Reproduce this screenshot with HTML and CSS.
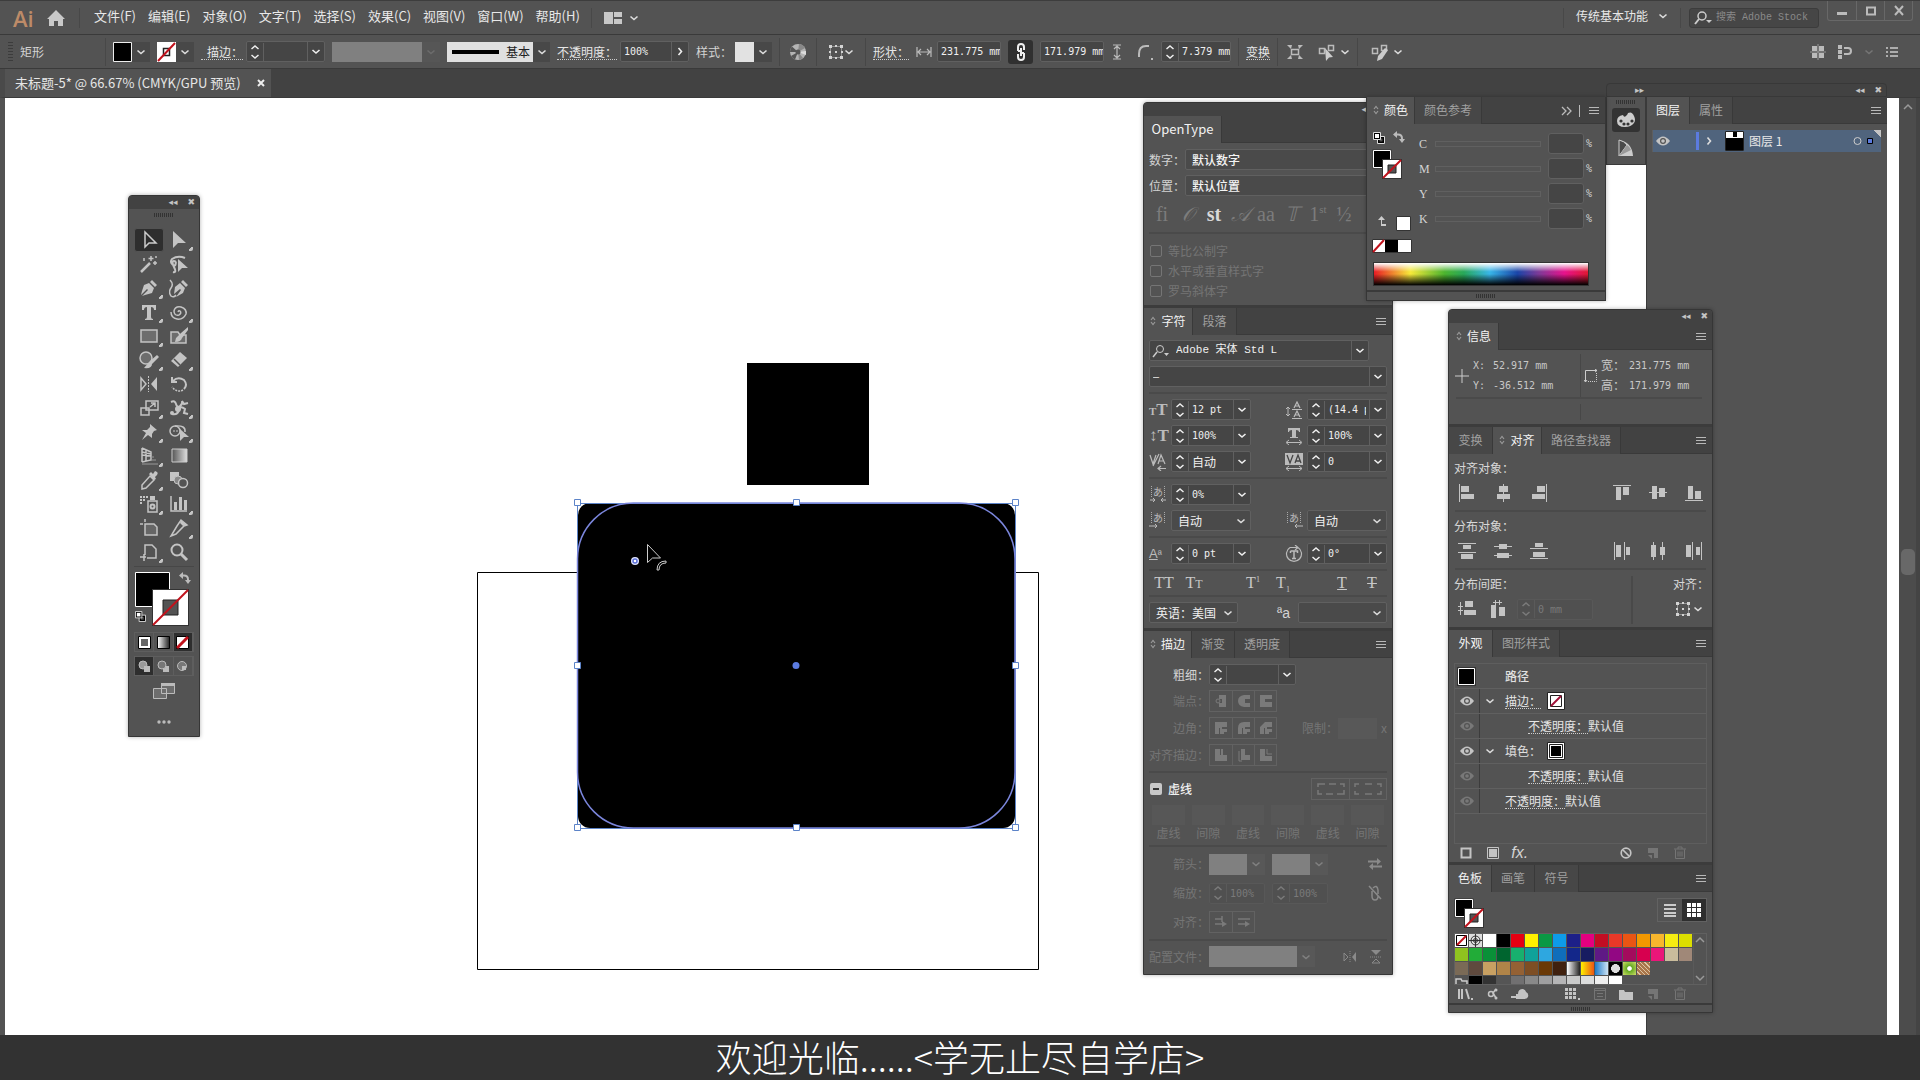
FILE: index.html
```html
<!DOCTYPE html>
<html lang="zh-CN">
<head>
<meta charset="utf-8">
<title>未标题-5* @ 66.67% (CMYK/GPU 预览)</title>
<link rel="stylesheet" href="styles.css">
</head>
<body>
<svg class="defs" aria-hidden="true">
  <defs>
    <linearGradient id="gr"><stop offset="0" stop-color="#555"/><stop offset="1" stop-color="#ddd"/></linearGradient>
    <linearGradient id="gb"><stop offset="0" stop-color="#fff"/><stop offset="1" stop-color="#222"/></linearGradient>
  </defs>
  <symbol id="chev" viewBox="0 0 10 10"><path d="M1.500 3.500 5 6.500l3.500-3" fill="none" stroke="currentColor" stroke-width="1.600"/></symbol>
  <symbol id="chev-r" viewBox="0 0 10 10"><path d="M3.500 1.500 6.500 5l-3 3.500" fill="none" stroke="currentColor" stroke-width="1.600"/></symbol>
  <symbol id="step" viewBox="0 0 10 18"><path d="M1.500 6 5 3l3.500 3M1.500 12 5 15l3.500-3" fill="none" stroke="currentColor" stroke-width="1.500"/></symbol>
  <symbol id="menu" viewBox="0 0 10 9"><path d="M0 1.500h10M0 4.500h10M0 7.500h10" stroke="currentColor"/></symbol>
  <symbol id="updown" viewBox="0 0 6 10"><path d="M1 4 3 1.500 5 4M1 6l2 2.500L5 6" fill="none" stroke="#999" stroke-width="1.200"/></symbol>
  <symbol id="eye" viewBox="0 0 14 10"><path d="M0 5q7-9 14 0q-7 9-14 0" fill="currentColor"/><circle cx="7" cy="5" r="3" fill="#535353"/><circle cx="7" cy="5" r="1.800" fill="currentColor"/></symbol>
  <symbol id="trash" viewBox="0 0 12 14"><path d="M0 3h12M4 3V1h4v2M1.500 3.500v9h9v-9M4 5.500v5M6 5.500v5M8 5.500v5" fill="none" stroke="currentColor"/></symbol>
  <symbol id="newitem" viewBox="0 0 12 12"><path d="M1 1h10v10H7V6H1z" fill="currentColor"/><path d="M1 8h4v4z" fill="currentColor"/></symbol>
  <symbol id="refpt" viewBox="0 0 16 16"><rect x="2.500" y="2.500" width="11" height="11" fill="none" stroke="currentColor" stroke-dasharray="1 1"/><path d="M1 1h3v3H1zM12 1h3v3h-3zM1 12h3v3H1zM12 12h3v3h-3zM7 1h2v2H7zM7 13h2v2H7zM1 7h2v2H1zM13 7h2v2h-2zM7 7h2v2H7z" fill="currentColor"/></symbol>
  <symbol id="fillstroke" viewBox="0 0 30 30"><path d="M.500.500h19v19H.500z" fill="#333"/><path d="M1.500 1.500h17v17h-17z" fill="#000" stroke="#fff"/><path d="M10 10h20v20H10z" fill="#333"/><path d="M11 11h18v18H11z" fill="#fff"/><path d="M16 16h8v8h-8z" fill="#535353" stroke="#222"/><path d="m11 29 18-18" stroke="#c1121c" stroke-width="2"/></symbol>
  <symbol id="default" viewBox="0 0 12 12"><path d="M4.500 4.500h7v7h-7z" fill="#000" stroke="#ddd"/><path d="M6.500 6.500h3v3h-3z" fill="#535353"/><path d="M.500.500h7v7h-7z" fill="#000" stroke="#ddd"/><path d="M2 2h4v4H2z" fill="#fff"/></symbol>
  <symbol id="swap" viewBox="0 0 12 12"><path d="M3 3.500h2q4 0 4 4V9" fill="none" stroke="currentColor" stroke-width="2"/><path d="M4 0v7L0 3.500zM6 8h6l-3 4z" fill="currentColor"/></symbol>
</svg>

<div class="app">
  <header class="menubar">
    <span class="logo">Ai</span>
    <button class="plain home" aria-label="主页"><svg width="20" height="18" viewBox="0 0 20 18"><path d="M10 1 1 10h2v7h5v-5h4v5h5v-7h2z" fill="#c9c9c9"/></svg></button>
    <nav class="menus">
      <button>文件(F)</button><button>编辑(E)</button><button>对象(O)</button><button>文字(T)</button><button>选择(S)</button><button>效果(C)</button><button>视图(V)</button><button>窗口(W)</button><button>帮助(H)</button>
    </nav>
    <button class="plain layout" aria-label="排列文档"><svg width="18" height="12" viewBox="0 0 18 12"><path d="M0 0h9v12H0zM10 0h8v5h-8zM10 7h8v5h-8z" fill="#c8c8c8"/></svg><svg class="c10"><use href="#chev"/></svg></button>
    <span class="spacer"></span>
    <button class="plain workspace-name">传统基本功能<svg class="c10"><use href="#chev"/></svg></button>
    <label class="search"><svg width="18" height="14" viewBox="0 0 18 14"><circle cx="8" cy="5" r="4" fill="none" stroke="#ccc" stroke-width="1.500"/><path d="m5 8-4 5" stroke="#ccc" stroke-width="2"/><path d="M12 9h6l-3 3z" fill="#ccc"/></svg><input aria-label="搜索" placeholder="搜索 Adobe Stock"></label>
    <div class="winbtns">
      <button aria-label="最小化"><svg width="12" height="12"><path d="M1 7h10v3H1z" fill="#bbb"/></svg></button>
      <button aria-label="还原"><svg width="12" height="12"><path d="M2 2.500h8v7H2z" fill="none" stroke="#bbb" stroke-width="2"/></svg></button>
      <button aria-label="关闭"><svg width="12" height="12"><path d="m2 1 8 9m0-9-8 9" stroke="#bbb" stroke-width="2"/></svg></button>
    </div>
  </header>

  <section class="control" aria-label="控制">
    <i class="vgrip"></i>
    <span class="kind">矩形</span>
    <button class="swcombo" aria-label="填色"><svg width="19" height="20"><path d="M.500.500h18v19H.500z" stroke="#eee"/></svg><svg class="c10"><use href="#chev"/></svg></button>
    <button class="swcombo" aria-label="描边颜色"><svg width="19" height="20"><path d="M0 0h19v20H0z" fill="#fff"/><path d="M6.500 6.500h6v7h-6z" fill="none" stroke="#222" stroke-width="1.500"/><path d="m1 19 17-18" stroke="#c1121c" stroke-width="2"/></svg><svg class="c10"><use href="#chev"/></svg></button>
    <div class="grp"><label class="dotted w42" for="sw">描边：</label><span class="field w79"><svg class="st"><use href="#step"/></svg><input id="sw"><svg class="ch"><use href="#chev"/></svg></span></div>
    <button class="graycombo" disabled aria-label="变量宽度"><i></i><svg class="c10"><use href="#chev"/></svg></button>
    <button class="brush"><i></i><span>基本</span><svg class="c10"><use href="#chev"/></svg></button>
    <div class="grp"><label class="dotted" for="op">不透明度：</label><span class="field w69"><input id="op" value="100%"><svg class="ch"><use href="#chev-r"/></svg></span></div>
    <div class="grp"><span>样式：</span><button class="swcombo" aria-label="样式"><svg width="19" height="20"><path d="M0 0h19v20H0z" fill="#e2e2e2"/></svg><svg class="c10"><use href="#chev"/></svg></button></div>
    <i class="vdiv"></i>
    <button class="plain w22" aria-label="重新着色"><svg width="18" height="18"><circle cx="9" cy="9" r="8" fill="#b4b4b4"/><path d="M9 9 3 3.500A8 8 0 0 0 1 9zM9 9l-7 4q2 3 4 3.500z" fill="#555"/><path d="M9 9 10 1q4 0 6 4z" fill="#888"/><path d="M9 9l8-1v4z" fill="#ddd"/><path d="M9 9l1 8 4-2z" fill="#888"/><circle cx="9" cy="9" r="2.500" fill="#555"/></svg></button>
    <i class="vdiv"></i>
    <button class="plain w34" aria-label="对齐"><svg width="16" height="16"><use href="#refpt"/></svg><svg class="c10"><use href="#chev"/></svg></button>
    <i class="vdiv"></i>
    <div class="grp"><label class="dotted" for="wd">形状：</label><svg class="w22" height="12" viewBox="0 0 22 12"><path d="M5 1v10M19 1v10M6 6h12M9 3 6 6l3 3M15 3l3 3-3 3" fill="none" stroke="#bbb" stroke-width="1.200"/></svg><span class="field w64"><input id="wd" value="231.775 mm"></span></div>
    <button class="link" aria-label="约束宽高比"><svg width="12" height="18" viewBox="0 0 12 18"><path d="M3 8V4q0-3 3-3t3 3v3M9 10v4q0 3-3 3t-3-3v-3M6 5v8M3 8h3M6 10h3" fill="none" stroke="#eee" stroke-width="2"/></svg></button>
    <span class="field w64"><input aria-label="高度" value="171.979 mm"></span>
    <svg width="12" height="16" viewBox="0 0 12 16"><path d="M2 1h8M2 15h8M6 2v12M3 5l3-3 3 3M3 11l3 3 3-3" fill="none" stroke="#bbb" stroke-width="1.200"/></svg>
    <button class="plain corner" aria-label="圆角"><svg width="17" height="16"><path d="M2 13V10Q2 2 9 2h3" fill="none" stroke="#bbb" stroke-width="2"/><path d="M14 14h2v2h-2z" fill="#bbb"/></svg></button>
    <span class="field w70"><svg class="st"><use href="#step"/></svg><input aria-label="圆角半径" value="7.379 mm"></span>
    <i class="vdiv"></i>
    <a class="dotted" href="#">变换</a>
    <i class="vdiv"></i>
    <button class="plain w20" aria-label="隔离"><svg width="16" height="16"><path d="M4.500 5.500h7v5h-7z" fill="none" stroke="#bbb" stroke-width="1.500"/><path d="m0 1 5 0-1 4zM16 1l-5 0 1 4zM0 15l5 0-1-4zM16 15l-5 0 1-4z" fill="#bbb"/></svg></button>
    <button class="plain w38" aria-label="选择类似"><svg width="18" height="18"><path d="M1.500 5.500h5v5h-5zM10.500 2.500h5v5h-5z" fill="none" stroke="#bbb" stroke-width="1.500"/><path d="m7 5 8 9-4 .500L8 18z" fill="#ccc"/></svg><svg class="c10"><use href="#chev"/></svg></button>
    <i class="vdiv"></i>
    <button class="plain w38" aria-label="编辑"><svg width="18" height="18"><path d="M1.500 5.500h5v5h-5zM10.500 2.500h5v5h-5z" fill="none" stroke="#bbb" stroke-width="1.500"/><path d="m14 5 3 2-6 9-5 2 1-5z" fill="#ccc"/></svg><svg class="c10"><use href="#chev"/></svg></button>
    <span class="spacer"></span>
    <div class="rightgrp">
      <svg width="16" height="16"><path d="M2 2h5v5H2zM9 2h5v5H9zM2 9h5v5H2zM9 9h5v5H9z" fill="#bbb"/><path d="M8 0v16M0 8h16" stroke="#999"/></svg>
      <svg width="14" height="16"><path d="M0 1h4v4H0zM0 6h4v4H0zM0 11h4v4H0z" fill="#bbb"/><path d="M6 4h4q3 0 3 3t-3 3H6" fill="none" stroke="#bbb" stroke-width="2"/></svg>
      <svg class="c10 dim"><use href="#chev"/></svg>
      <svg width="12" height="12"><path d="M0 2h2M4 2h8M0 6h2M4 6h8M0 10h2M4 10h8" stroke="#ccc" stroke-width="1.500"/></svg>
    </div>
  </section>

  <div class="doctabs"><div class="doctab"><span>未标题-5* @ 66.67% (CMYK/GPU 预览)</span><button class="plain" aria-label="关闭文档"><svg width="8" height="8"><path d="m1 1 6 6m0-6L1 7" stroke="#eee" stroke-width="2"/></svg></button></div></div>

  <main class="stage">
    <svg class="art" width="1100" height="937" viewBox="5 98 1100 937">
      <path d="M477.500 572.500h561v397h-561z" fill="none" stroke="#000"/>
      <path d="M747 363h122v122H747z"/>
      <rect x="578" y="503" width="437" height="325" rx="12"/>
      <path d="M577.500 503.500h438v325h-438z" fill="none" stroke="#5c83c8"/>
      <rect x="577.500" y="503" width="437.500" height="325" rx="56" fill="none" stroke="#7b86dc" stroke-width="1.500"/>
      <g fill="#fff" stroke="#5c83c8"><path d="M574.500 499.500h6v6h-6zM793.500 499.500h6v6h-6zM1012.500 499.500h6v6h-6zM574.500 662.500h6v6h-6zM1012.500 662.500h6v6h-6zM574.500 824.500h6v6h-6zM793.500 824.500h6v6h-6zM1012.500 824.500h6v6h-6z"/></g>
      <circle cx="796" cy="665.500" r="3.500" fill="#5b7be0"/>
      <circle cx="635" cy="561" r="4" fill="#dfe4ff"/><circle cx="635" cy="561" r="2" fill="#fff" stroke="#5b6fd8" stroke-width="1.500"/>
      <path d="M647.500 544.500v18l5-4.500h8zM657 570q0-9 9-9v2q-7 0-7 7z" fill="#000" stroke="#ccc"/>
    </svg>
    <div class="vscroll"><svg class="c10"><path d="m1 7 4-4 4 4" fill="none" stroke="#999" stroke-width="1.500"/></svg><i></i></div>
  </main>
  <footer class="caption">欢迎光临......&lt;学无止尽自学店&gt;</footer>

  <!-- tools -->
  <aside class="panel tools" aria-label="工具">
    <div class="title"><span>◂◂</span><span>✖</span></div>
    <i class="hgrip"></i>
    <div class="toolgrid">
      <button class="on" aria-label="选择"><svg><path d="M6 2v15l4-4h7z" fill="none" stroke="#ccc" stroke-width="1.500"/></svg></button>
      <button class="m" aria-label="直接选择"><svg><path d="M4 1v17l5-5h8z" fill="#c4c4c4"/></svg></button>
      <button aria-label="魔棒"><svg><path d="m2 18 9-9" stroke="#c4c4c4" stroke-width="2.500"/><path d="M12 2v5M9.500 4.500h5M16 7v4M14 9h4M5 4v3M17 2v2" stroke="#c4c4c4" stroke-width="1.500"/></svg></button>
      <button aria-label="套索"><svg><path d="M6 12Q0 9 3 5q6-4 13-1M6 12q2-5-1-5t0 6-1 5" fill="none" stroke="#c4c4c4" stroke-width="2"/><path d="M9 5v13l4-4h6z" fill="#c4c4c4"/></svg></button>
      <button class="m" aria-label="钢笔"><svg><path d="m13 2 5 5-2 2-5-5zM10 5l5 5-2 5-7 2-3 1 6-6-1-1-6 6 1-4 2-6z" fill="#c4c4c4"/></svg></button>
      <button aria-label="曲率"><svg><path d="m14 2 5 5-2 2-5-5zM11 5l5 5-2 5-7 4 5-7-1-1-6 5 1-7z" fill="#c4c4c4"/><path d="M1 2q4 4 1 8t0 8q3 2 5-1" fill="none" stroke="#c4c4c4" stroke-width="1.500"/></svg></button>
      <button class="m" aria-label="文字"><svg><path d="M3 3h14v5h-2q0-3-3-3v10q0 2 2 2v1H6v-1q2 0 2-2V5Q5 5 5 8H3z" fill="#c4c4c4"/></svg></button>
      <button class="m" aria-label="螺旋线"><svg><path d="M9 10q1-2 2-1 2 2-1 4-5 1-5-4 1-5 7-4 6 2 5 7-3 6-9 5-6-1-6-7" fill="none" stroke="#c4c4c4" stroke-width="1.500"/></svg></button>
      <button class="m" aria-label="矩形"><svg><path d="M2 4h16v12H2z" fill="#6d6d6d" stroke="#c4c4c4" stroke-width="1.500"/></svg></button>
      <button aria-label="画笔"><svg><path d="M2 6h7l2 3h6v8H2z" fill="#6d6d6d" stroke="#c4c4c4" stroke-width="1.500"/><path d="m19 1-7 6-5 5-1 4q6 0 7-4l6-8z" fill="#c4c4c4"/></svg></button>
      <button class="m" aria-label="斑点画笔"><svg><circle cx="7" cy="8" r="6" fill="#6d6d6d" stroke="#c4c4c4" stroke-width="1.500"/><path d="m18 5-7 6-6 7q8 1 8-4l7-7z" fill="#c4c4c4"/></svg></button>
      <button class="m" aria-label="橡皮擦"><svg><path d="m11 2 7 6-9 9-7-6z" fill="#c4c4c4"/><path d="m5 9 6 6" stroke="#535353" stroke-width="1.500"/></svg></button>
      <button aria-label="镜像"><svg><path d="M2 4v12l5-6z" fill="none" stroke="#c4c4c4" stroke-width="1.500"/><path d="M18 3v14l-6-7z" fill="#c4c4c4"/><path d="M9.500 2v16" stroke="#c4c4c4" stroke-dasharray="2 1"/></svg></button>
      <button aria-label="旋转"><svg><path d="M3 3v5h5M4 7q5-5 11-1 4 5 0 9" fill="none" stroke="#c4c4c4" stroke-width="2"/><path d="M14 16q-6 3-11-3" fill="none" stroke="#c4c4c4" stroke-width="1.500" stroke-dasharray="2 1"/></svg></button>
      <button class="m" aria-label="比例缩放"><svg><path d="M7 3h12v9H7zM2 10h8v7H2z" fill="none" stroke="#c4c4c4" stroke-width="1.500"/><path d="m11 9 5-4M12 5h4v4" fill="none" stroke="#c4c4c4" stroke-width="1.500"/></svg></button>
      <button class="m" aria-label="宽度"><svg><path d="M2 4q4-2 5 2t4 2 2-5l2 3 4-1M3 16q6 1 7-4t6-1l-1 4 4 1" fill="none" stroke="#c4c4c4" stroke-width="2"/><circle cx="9" cy="11" r="3" fill="#c4c4c4"/><circle cx="3" cy="15" r="2" fill="#c4c4c4"/></svg></button>
      <button class="m" aria-label="操控变形"><svg><path d="m11 2 7 6-3 1-2 3v4l-4-3-6 5 4-7-4-3h5l3-3z" fill="#c4c4c4"/></svg></button>
      <button class="m" aria-label="形状生成器"><svg><circle cx="6" cy="9" r="5" fill="none" stroke="#c4c4c4" stroke-width="1.500"/><path d="M6 4q11-1 10 6" fill="none" stroke="#c4c4c4" stroke-width="1.500"/><path d="M4 9h6" stroke="#c4c4c4" stroke-dasharray="2 1"/><path d="M11 7v12l4-4h5z" fill="#c4c4c4"/></svg></button>
      <button class="m" aria-label="透视网格"><svg><path d="M3 2v14M3 2l9 4v8l-9 2M3 9l9 1M7 4v11M3 6l9 2" fill="none" stroke="#c4c4c4" stroke-width="1.500"/><path d="M12 11h3M12 14h5M3 18h16" stroke="#999"/></svg></button>
      <button aria-label="渐变"><svg><path d="M3 3h15v13H3z" fill="url(#gr)" stroke="#ccc"/></svg></button>
      <button class="m" aria-label="吸管"><svg><path d="m11 6 4 4-8 8-4 1 0-4z" fill="none" stroke="#c4c4c4" stroke-width="1.500"/><path d="m12 2 2 2 2-3q4 1 2 4l-2 2 1 2-2 1-5-6z" fill="#c4c4c4"/></svg></button>
      <button aria-label="混合"><svg><path d="M1 2h9v9H1z" fill="#c4c4c4"/><circle cx="9" cy="10" r="4" fill="#888" stroke="#c4c4c4"/><circle cx="14" cy="13" r="4.500" fill="#535353" stroke="#c4c4c4" stroke-width="1.500"/></svg></button>
      <button class="m" aria-label="符号喷枪"><svg><path d="M9 7h9v11H9z" fill="none" stroke="#c4c4c4" stroke-width="1.500"/><path d="M11 2h5v4h-5zM1 2h2v2H1zM4 2h2v2H4zM7 2h2v2H7zM1 5h2v2H1zM4 5h2v2H4zM1 8h2v2H1z" fill="#c4c4c4"/><circle cx="13.500" cy="12.500" r="2" fill="none" stroke="#c4c4c4" stroke-width="2"/></svg></button>
      <button class="m" aria-label="柱形图"><svg><path d="M2 2v15h16" fill="none" stroke="#c4c4c4" stroke-width="1.500"/><path d="M5 8h3v8H5zM10 3h3v13h-3zM15 6h3v10h-3z" fill="#c4c4c4"/></svg></button>
      <button aria-label="画板"><svg><path d="M6 6h9l3 3v8H6zM1 6h3M6 1v3" fill="#666" stroke="#c4c4c4" stroke-width="1.500"/></svg></button>
      <button class="m" aria-label="切片"><svg><path d="m12 2 6 5-3 1-8 8-5 2 6-10z" fill="none" stroke="#c4c4c4" stroke-width="1.500"/><path d="m12 2 6 5-4 1-3-3z" fill="#c4c4c4"/></svg></button>
      <button class="m" aria-label="页面"><svg><path d="M6 13V3h7l4 4v9H8M1 15h6M5 12v7" fill="none" stroke="#c4c4c4" stroke-width="1.500"/></svg></button>
      <button aria-label="缩放"><svg><circle cx="8" cy="8" r="5.500" fill="none" stroke="#c4c4c4" stroke-width="2"/><path d="m12 12 6 6" stroke="#c4c4c4" stroke-width="3"/></svg></button>
    </div>
    <svg class="bigfs" width="60" height="56" viewBox="0 0 60 56"><path d="M1.500.500h34v34h-34z" stroke="#fff"/><path d="M18 17h37v37H18z" fill="#333"/><path d="M19 18h35v35H19z" fill="#fff"/><path d="M29 28h15v15H29z" fill="#535353" stroke="#222"/><path d="m19 53 35-35" stroke="#c1121c" stroke-width="2"/><use href="#swap" x="45" y="0" width="12" height="12" color="#bbb"/><use href="#default" x="1" y="39" width="11" height="11"/></svg>
    <div class="trio">
      <button aria-label="颜色"><svg width="13" height="13"><path d="M.500.500h12v12H.500z" fill="#fff" stroke="#000"/><path d="M3 3h7v7H3z" fill="#666"/></svg></button>
      <button aria-label="渐变填充"><svg width="13" height="13"><path d="M.500.500h12v12H.500z" fill="url(#gb)" stroke="#000"/></svg></button>
      <button class="on" aria-label="无"><svg width="13" height="13"><path d="M.500.500h12v12H.500z" fill="#fff" stroke="#000"/><path d="m1 12 11-11" stroke="#c1121c" stroke-width="3"/></svg></button>
    </div>
    <div class="trio">
      <button class="on" aria-label="正常绘图"><svg width="13" height="13"><circle cx="5" cy="5" r="4" fill="#999" stroke="#bbb"/><path d="M6 6h6v6H6z" fill="#bbb"/></svg></button>
      <button aria-label="背面绘图"><svg width="13" height="13"><path d="M6 6h6v6H6z" fill="#bbb"/><circle cx="5" cy="5" r="4" fill="#777" stroke="#bbb"/></svg></button>
      <button aria-label="内部绘图"><svg width="13" height="13"><circle cx="6" cy="6" r="4.500" fill="#777" stroke="#bbb"/><path d="M6 6h4v4H6z" fill="#bbb"/></svg></button>
    </div>
    <button class="plain screen" aria-label="屏幕模式"><svg width="22" height="16"><path d="M.500 5.500h13v10H.500zM8.500.500h13v10h-13z" fill="#6d6d6d" stroke="#bbb"/><path d="M8 0h14v3H8z" fill="#bbb"/></svg></button>
    <button class="plain more" aria-label="编辑工具栏"><svg width="14" height="4"><circle cx="2" cy="2" r="1.700" fill="#bbb"/><circle cx="7" cy="2" r="1.700" fill="#bbb"/><circle cx="12" cy="2" r="1.700" fill="#bbb"/></svg></button>
  </aside>

  <!-- OpenType / character / stroke -->
  <aside class="panel type">
    <div class="title"><span>◂◂</span><span>✖</span></div>
    <section>
      <div class="tabs"><button class="on t78">OpenType</button></div>
      <div class="body ot">
        <div class="lrow"><label for="fig">数字：</label><select id="fig"><option>默认数字</option></select></div>
        <div class="lrow"><label for="pos">位置：</label><select id="pos"><option>默认位置</option></select></div>
        <div class="otico"><span>fi</span><i>𝒪</i><b>st</b><i>𝒜</i><span>aa</span><i>𝕋</i><span>1<sup>st</sup></span><span>½</span></div>
        <hr>
        <div class="checks">
          <label><input type="checkbox" disabled>等比公制字</label>
          <label><input type="checkbox" disabled>水平或垂直样式字</label>
          <label><input type="checkbox" disabled>罗马斜体字</label>
        </div>
      </div>
    </section>
    <section>
      <div class="tabs"><button class="on t49"><svg class="ud"><use href="#updown"/></svg>字符</button><button class="t44">段落</button><svg class="mn"><use href="#menu"/></svg></div>
      <div class="body">
        <span class="field font"><svg class="fs" viewBox="0 0 18 14"><circle cx="8" cy="5" r="3.500" fill="none" stroke="#ccc"/><path d="m5 8-4 5" stroke="#ccc" stroke-width="1.500"/><path d="M12 9h5l-2.500 3z" fill="#ccc"/></svg><input aria-label="字体" value="Adobe 宋体 Std L"><svg class="ch"><use href="#chev"/></svg></span>
        <span class="field"><input aria-label="字体样式" value="–"><svg class="ch"><use href="#chev"/></svg></span>
        <hr>
        <div class="pair">
          <div class="ctl"><span class="gl"><small>T</small>T</span><span class="field"><svg class="st"><use href="#step"/></svg><input aria-label="字号" value="12 pt"><svg class="ch"><use href="#chev"/></svg></span></div>
          <div class="ctl"><svg width="18" height="18"><path d="M3 6v9M1 8l2-2 2 2M1 13l2 2 2-2M7 8.500h10M7 17.500h10" fill="none" stroke="#bbb"/><path d="m9 7 3-6 3 6M10 5h4M9 16l3-6 3 6M10 14h4" fill="none" stroke="#bbb" stroke-width="1.200"/></svg><span class="field"><svg class="st"><use href="#step"/></svg><input aria-label="行距" value="(14.4 pt)"><svg class="ch"><use href="#chev"/></svg></span></div>
          <div class="ctl"><span class="gl">↕T</span><span class="field"><svg class="st"><use href="#step"/></svg><input aria-label="垂直缩放" value="100%"><svg class="ch"><use href="#chev"/></svg></span></div>
          <div class="ctl"><svg width="18" height="18"><path d="M3 1h12v4h-1q0-2-3-2v7h2v1H5v-1h2V3Q4 3 4 5H3z" fill="#bbb"/><path d="M2 15.500h14M4 13l-3 2.500L4 18M14 13l3 2.500-3 2.500" fill="none" stroke="#bbb"/></svg><span class="field"><svg class="st"><use href="#step"/></svg><input aria-label="水平缩放" value="100%"><svg class="ch"><use href="#chev"/></svg></span></div>
          <div class="ctl"><svg width="18" height="18"><path d="m1 2 3 9 3-9M4 13 10 1M9 11l3-9 4 9M10 8h5M9 15.500h8M12 13l-3 2.500 3 2.500" fill="none" stroke="#bbb" stroke-width="1.200"/></svg><span class="field"><svg class="st"><use href="#step"/></svg><input class="cn" aria-label="字偶间距" value="自动"><svg class="ch"><use href="#chev"/></svg></span></div>
          <div class="ctl"><svg width="18" height="18"><path d="M0 0h18v12H0z" fill="#bbb"/><path d="m2 2 3 8 3-8M10 10l3-8 3 8M11 8h4" fill="none" stroke="#444" stroke-width="1.300"/><path d="M1 15.500h16M4 13l-3 2.500L4 18M14 13l3 2.500-3 2.500" fill="none" stroke="#bbb"/></svg><span class="field"><svg class="st"><use href="#step"/></svg><input aria-label="字符间距" value="0"><svg class="ch"><use href="#chev"/></svg></span></div>
        </div>
        <hr>
        <div class="pair">
          <div class="ctl"><span class="kana"><span>あ</span><svg width="18" height="6"><path d="M1 3h5M4 1l2 2-2 2M17 3h-5M14 1l-2 2 2 2" fill="none" stroke="#bbb"/></svg></span><span class="field"><svg class="st"><use href="#step"/></svg><input aria-label="比例间距" value="0%"><svg class="ch"><use href="#chev"/></svg></span></div><span></span>
          <div class="ctl"><span class="kana"><span>あ</span><svg width="18" height="6"><path d="M0 3h8M6 1l2 2-2 2" fill="none" stroke="#bbb"/></svg></span><span class="sel"><select aria-label="左侧间距"><option>自动</option></select><svg class="c10"><use href="#chev"/></svg></span></div>
          <div class="ctl"><span class="kana"><span>あ</span><svg width="18" height="6"><path d="M18 3h-8M12 1l-2 2 2 2" fill="none" stroke="#bbb"/></svg></span><span class="sel"><select aria-label="右侧间距"><option>自动</option></select><svg class="c10"><use href="#chev"/></svg></span></div>
        </div>
        <hr>
        <div class="pair">
          <div class="ctl"><span class="gl sans"><u>A</u><small>ª</small></span><span class="field"><svg class="st"><use href="#step"/></svg><input aria-label="基线偏移" value="0 pt"><svg class="ch"><use href="#chev"/></svg></span></div>
          <div class="ctl"><svg width="18" height="18"><path d="M5 2.500a7.500 7.500 0 1 0 8 0M5 2.500h8M10 0l3 2.500L10 5" fill="none" stroke="#bbb" stroke-width="1.200"/><path d="M5.500 6h7v2M9 6v7M7 13.500h4M5.500 6v2" fill="none" stroke="#bbb" stroke-width="1.500"/></svg><span class="field"><svg class="st"><use href="#step"/></svg><input aria-label="字符旋转" value="0°"><svg class="ch"><use href="#chev"/></svg></span></div>
        </div>
        <hr>
        <div class="tts"><button>TT</button><button>T<small>T</small></button><i></i><button>T<sup>1</sup></button><button>T<sub>1</sub></button><i></i><button><u>T</u></button><button><s>T</s></button></div>
        <hr>
        <div class="lang"><span class="sel"><select aria-label="语言"><option>英语：美国</option></select><svg class="c10"><use href="#chev"/></svg></span><span class="aa">ªa</span><span class="sel"><select aria-label="消除锯齿"><option></option></select><svg class="c10"><use href="#chev"/></svg></span></div>
      </div>
    </section>
    <section>
      <div class="tabs"><button class="on t48"><svg class="ud"><use href="#updown"/></svg>描边</button><button class="t43">渐变</button><button class="t55">透明度</button><svg class="mn"><use href="#menu"/></svg></div>
      <div class="body stroke">
        <div class="srow live"><label for="wt">粗细：</label><span class="field w87"><svg class="st"><use href="#step"/></svg><input id="wt"><svg class="ch"><use href="#chev"/></svg></span></div>
        <div class="srow b"><span>端点：</span><div class="bg"><button disabled><svg><path d="M5 1h7v12H5V9h3V5H5z"/><circle cx="4" cy="7" r="2" fill="none" stroke="#7a7a7a"/></svg></button><button disabled><svg><path d="M7 1h6v4H8v4h5v4H7Q1 12 1 7t6-6z"/></svg></button><button disabled><svg><path d="M1 1h12v4H6v3h7v5H1z"/></svg></button></div></div>
        <div class="srow b"><span>边角：</span><div class="bg"><button disabled><svg><path d="M1 1h12v5H8v2h5v3h-3v2H6V7H5v6H1z"/></svg></button><button disabled><svg><path d="M7 1h6v5H8v2h5v3h-3v2H6V7H5v6H1V7q0-6 6-6z"/></svg></button><button disabled><svg><path d="M6 1h7v5H8v2h5v3h-3v2H6V7H5v6H1V6z"/></svg></button></div><label class="lim" for="lim">限制：</label><input id="lim" class="ghost" disabled><span class="x">x</span></div>
        <div class="srow b"><span>对齐描边：</span><div class="bg"><button disabled><svg><path d="M1 1h5v6h1V1h2v6h4v6H1z"/></svg></button><button disabled><svg><path d="M4 1h4v6h5v5H4z"/><path d="M2 3v10h3" fill="none" stroke="#7a7a7a"/></svg></button><button disabled><svg><path d="M1 1h5v7h7v5H1z"/><path d="M8 1v5h5" fill="none" stroke="#7a7a7a"/></svg></button></div></div>
        <hr>
        <div class="dash"><label><input type="checkbox" class="mixed" checked>虚线</label><div class="bg wide"><button disabled><svg><path d="M2 5V2h7M13 2h7M24 2h4v3M2 8v4h4M10 12h7M21 12h7V8" fill="none" stroke="#7a7a7a" stroke-width="1.500"/></svg></button><button disabled><svg><path d="M2 5V2h4M12 2h7M24 2h4v3M2 9v3h4M12 12h7M24 12h4V9" fill="none" stroke="#7a7a7a" stroke-width="1.500"/></svg></button></div></div>
        <div class="dashes"><label><input disabled>虚线</label><label><input disabled>间隙</label><label><input disabled>虚线</label><label><input disabled>间隙</label><label><input disabled>虚线</label><label><input disabled>间隙</label></div>
        <hr>
        <div class="srow a"><span>箭头：</span><button class="gsel" disabled aria-label="起点箭头"><i></i><svg class="c10"><use href="#chev"/></svg></button><button class="gsel" disabled aria-label="终点箭头"><i></i><svg class="c10"><use href="#chev"/></svg></button><svg class="end" width="14" height="12"><path d="M0 3.500h10M4 8.500h10" stroke="#8a8a8a" stroke-width="2"/><path d="M9 0v7l4-3.500zM5 5v7L1 8.500z" fill="#8a8a8a"/></svg></div>
        <div class="srow a"><span>缩放：</span><span class="field off w56"><svg class="st"><use href="#step"/></svg><input aria-label="起点缩放" disabled value="100%"></span><span class="field off w56"><svg class="st"><use href="#step"/></svg><input aria-label="终点缩放" disabled value="100%"></span><svg class="end" width="14" height="16"><path d="m1 1 12 13M4 6v5q0 4 3 4t3-4M5 3q4-4 5 2v4" fill="none" stroke="#8a8a8a" stroke-width="1.500"/></svg></div>
        <div class="srow a"><span>对齐：</span><div class="bg"><button disabled><svg><path d="M1 4h7M1 9h10M8 1v6" stroke="#7a7a7a" stroke-width="1.500"/><path d="M8 6v6l5-3z"/></svg></button><button disabled><svg><path d="M1 4h12M1 9h9" stroke="#7a7a7a" stroke-width="1.500"/><path d="M8 6v6l5-3z"/></svg></button></div></div>
        <hr>
        <div class="srow"><span>配置文件：</span><button class="gsel long" disabled aria-label="配置文件"><i></i><svg class="c10"><use href="#chev"/></svg></button><svg class="end" width="14" height="12"><path d="M1 2v8l4-4z" fill="none" stroke="#8a8a8a"/><path d="M13 1v10L9 6z" fill="#8a8a8a"/><path d="M7 0v12" stroke="#8a8a8a" stroke-dasharray="1 1"/></svg><svg class="nx" width="12" height="14"><path d="M1 0h10L6 5z" fill="#8a8a8a"/><path d="M2 13h8L6 9z" fill="none" stroke="#8a8a8a"/><path d="M0 7h12" stroke="#8a8a8a" stroke-dasharray="1 1"/></svg></div>
      </div>
    </section>
  </aside>

  <!-- dock -->
  <aside class="dock">
    <div class="title"><span class="exp">▸▸</span><span>◂◂</span><span>✖</span></div>
    <div class="dockrow">
      <div class="strip"><i class="hgrip"></i>
        <button class="on" aria-label="颜色面板"><svg width="20" height="18"><path d="M1 10q0-5 6-6 1 3 3 1t2-3q4-2 6 3 2 4 0 7-3 4-9 4-8 0-8-6z" fill="#ccc"/><g fill="#333"><circle cx="5" cy="10" r="1.600"/><circle cx="8" cy="13" r="1.600"/><circle cx="12" cy="13" r="1.600"/><circle cx="16" cy="10" r="1.600"/></g></svg></button>
        <button aria-label="颜色参考面板"><svg width="16" height="18"><path d="M1 1q13 2 14 16H1z" fill="#ccc"/><path d="M1 1q5 1 8 5L1 17z" fill="#4a4a4a" stroke="#ccc"/><path d="M9 6q3 2 4 5L1 17z" fill="#999"/></svg></button>
      </div>
      <section class="layers">
        <div class="tabs"><button class="on t43">图层</button><button class="t43">属性</button><svg class="mn"><use href="#menu"/></svg></div>
        <div class="layerlist"><div class="layer"><svg class="eye"><use href="#eye"/></svg><i class="bar"></i><svg class="c10"><use href="#chev-r"/></svg><svg width="19" height="20"><path d="M.500.500h18v19H.500z" fill="#fff" stroke="#222"/><path d="M1 7h17v12H1zM8 1h4v5H8z"/></svg><span>图层 1</span><svg class="tgt" width="28" height="12"><circle cx="4.500" cy="6" r="3.500" fill="none" stroke="#ccc"/><path d="M14.500 3.500h5v5h-5z" fill="#5b7be0" stroke="#000"/></svg></div></div>
      </section>
    </div>
  </aside>

  <!-- colour -->
  <aside class="panel color">
    <div class="tabs"><button class="on t48"><svg class="ud"><use href="#updown"/></svg>颜色</button><button class="t67">颜色参考</button><svg class="more2" width="22" height="12"><path d="m1 2 4 4-4 4M6 2l4 4-4 4" fill="none" stroke="#bbb" stroke-width="1.300"/><path d="M18.500 0v12" stroke="#bbb"/></svg><svg class="mn"><use href="#menu"/></svg></div>
    <div class="cbody">
      <svg width="44" height="126" viewBox="0 0 44 126"><use href="#default" x="1" y="3" width="12" height="12"/><use href="#swap" x="21" y="2" width="12" height="12" color="#bbb"/><use href="#fillstroke" x="0" y="20" width="30" height="30"/><path d="M7 95h7v2H9v-6H6l3.500-4L13 91h-3v4" fill="#ccc"/><path d="M24.500 87.500h14v14h-14z" fill="#fff" stroke="#333"/><path d="M.500 110.500h39v13H.500z" fill="#fff" stroke="#333"/><path d="M13 111h13v12H13z"/><path d="m1 123 11-12" stroke="#c1121c" stroke-width="2"/></svg>
      <div class="sliders">
        <label><span>C</span><i></i><input><em>%</em></label>
        <label><span>M</span><i></i><input><em>%</em></label>
        <label><span>Y</span><i></i><input><em>%</em></label>
        <label><span>K</span><i></i><input><em>%</em></label>
      </div>
    </div>
    <div class="spectrum"></div>
    <div class="foot"><i class="hgrip"></i></div>
  </aside>

  <!-- info / align / appearance / swatches -->
  <aside class="panel info">
    <div class="title"><span>◂◂</span><span>✖</span></div>
    <section>
      <div class="tabs"><button class="on t50"><svg class="ud"><use href="#updown"/></svg>信息</button><svg class="mn"><use href="#menu"/></svg></div>
      <div class="infobody">
        <div><svg width="14" height="14"><path d="M7 0v14M0 7h14" stroke="#ccc"/></svg><dl><dt>X:</dt><dd>52.917 mm</dd><dt>Y:</dt><dd>-36.512 mm</dd></dl></div>
        <div><svg width="14" height="14"><path d="M1.500 13V1.500H13M11 0l2 1.500L11 3M0 11l1.500 2L3 11" fill="none" stroke="#ccc"/><path d="M12.500 4v8.500H4" fill="none" stroke="#ccc" stroke-dasharray="1 1"/></svg><dl class="wide"><dt>宽：</dt><dd>231.775 mm</dd><dt>高：</dt><dd>171.979 mm</dd></dl></div>
      </div>
      <div class="infofoot"><hr><i></i></div>
    </section>
    <section>
      <div class="tabs"><button class="t44">变换</button><button class="on t49"><svg class="ud"><use href="#updown"/></svg>对齐</button><button class="t79">路径查找器</button><svg class="mn"><use href="#menu"/></svg></div>
      <div class="ablock"><span>对齐对象：</span><div class="aicons">
        <button aria-label="左对齐"><svg><path d="M1 0h1v18H1zM3 2h8v6H3zM3 10h13v5H3z"/></svg></button><button aria-label="水平居中"><svg><path d="M9 0h1v18H9zM5 2h9v6H5zM3 10h13v5H3z"/></svg></button><button aria-label="右对齐"><svg><path d="M16 0h1v18h-1zM7 2h8v6H7zM2 10h13v5H2z"/></svg></button><i></i>
        <button aria-label="顶对齐"><svg><path d="M0 1h18v1H0zM3 3h5v13H3zM10 3h6v8h-6z"/></svg></button><button aria-label="垂直居中"><svg><path d="M0 8h18v1H0zM3 2h5v13H3zM10 4h6v9h-6z"/></svg></button><button aria-label="底对齐"><svg><path d="M0 16h18v1H0zM3 2h5v13H3zM10 7h6v8h-6z"/></svg></button></div><hr></div>
      <div class="ablock"><span>分布对象：</span><div class="aicons">
        <button aria-label="顶分布"><svg><path d="M0 1h18v1H0zM5 3h8v4H5zM0 10h18v1H0zM3 12h12v5H3z"/></svg></button><button aria-label="垂直分布"><svg><path d="M0 4h18v1H0zM5 2h8v5H5zM0 13h18v1H0zM3 11h12v5H3z"/></svg></button><button aria-label="底分布"><svg><path d="M0 6h18v1H0zM5 1h8v4H5zM0 16h18v1H0zM3 10h12v5H3z"/></svg></button><i></i>
        <button aria-label="左分布"><svg><path d="M1 0h1v18H1zM3 3h5v12H3zM11 0h1v18h-1zM13 5h4v8h-4z"/></svg></button><button aria-label="水平分布"><svg><path d="M4 0h1v18H4zM2 3h5v12H2zM13 0h1v18h-1zM11 5h5v8h-5z"/></svg></button><button aria-label="右分布"><svg><path d="M7 0h1v18H7zM1 3h5v12H1zM16 0h1v18h-1zM11 5h4v8h-4z"/></svg></button></div><hr></div>
      <div class="ablock last"><div><span>分布间距：</span><div class="aicons">
        <button aria-label="垂直分布间距"><svg><path d="M2 2h1v13H2zM0 6h5v1H0zM0 10h5v1H0zM7 1h8v6H7zM6 10h12v5H6z"/></svg></button><button aria-label="水平分布间距"><svg><path d="M3 2h9v1H3zM5 0h1v5H5zM9 0h1v5H9zM1 5h5v13H1zM9 7h6v9H9z"/></svg></button><span class="field off w76"><svg class="st"><use href="#step"/></svg><input aria-label="间距值" disabled value="0 mm"></span></div></div><div class="alto"><span>对齐：</span><button class="plain" aria-label="对齐方式"><svg width="16" height="16"><use href="#refpt"/></svg><svg class="c10"><use href="#chev"/></svg></button></div></div>
    </section>
    <section>
      <div class="tabs"><button class="on t44">外观</button><button class="t67">图形样式</button><svg class="mn"><use href="#menu"/></svg></div>
      <div class="applist">
        <div class="head"><svg width="19" height="19"><path d="M0 0h19v19H0z" fill="#333"/><path d="M1.500 1.500h16v16h-16z" stroke="#fff"/></svg><b>路径</b></div>
        <div><svg class="eye"><use href="#eye"/></svg><svg class="c10"><use href="#chev"/></svg><a href="#" class="dotted">描边：</a><svg class="chip" width="18" height="18"><path d="M.500.500h17v17H.500z" fill="#fff" stroke="#222"/><path d="M3.500 3.500h11v11h-11z" fill="none" stroke="#222"/><path d="m4 14 10-10" stroke="#a01238" stroke-width="2"/></svg></div>
        <div class="sub"><svg class="eye dim"><use href="#eye"/></svg><a href="#" class="dotted">不透明度：</a>默认值</div>
        <div><svg class="eye"><use href="#eye"/></svg><svg class="c10"><use href="#chev"/></svg><span>填色：</span><svg class="chip" width="18" height="18"><path d="M.500.500h17v17H.500z" fill="#fff" stroke="#222"/><path d="M2.500 2.500h13v13h-13z" fill="#fff" stroke="#222"/><path d="M4 4h10v10H4z"/></svg></div>
        <div class="sub"><svg class="eye dim"><use href="#eye"/></svg><a href="#" class="dotted">不透明度：</a>默认值</div>
        <div class="flat"><svg class="eye dim"><use href="#eye"/></svg><a href="#" class="dotted">不透明度：</a>默认值</div>
      </div>
      <div class="pbar">
        <button aria-label="添加描边"><svg width="12" height="12"><path d="M1.500 1.500h9v9h-9z" fill="none" stroke="#c4c4c4" stroke-width="2"/></svg></button>
        <button aria-label="添加填色"><svg width="12" height="12"><path d="M.500.500h11v11H.500z" fill="none" stroke="#c4c4c4"/><path d="M2 2h8v8H2z" fill="#c4c4c4"/></svg></button>
        <button class="fx">fx.</button><i></i><i></i><i></i>
        <button aria-label="清除外观"><svg width="12" height="12"><circle cx="6" cy="6" r="4.800" fill="none" stroke="#c4c4c4" stroke-width="1.700"/><path d="m3 3 6 6" stroke="#c4c4c4" stroke-width="1.700"/></svg></button>
        <button class="dim" aria-label="复制项目"><svg width="12" height="12"><use href="#newitem"/></svg></button>
        <button class="dim" aria-label="删除项目"><svg width="12" height="14"><use href="#trash"/></svg></button>
      </div>
    </section>
    <section>
      <div class="tabs"><button class="on t43">色板</button><button class="t43">画笔</button><button class="t44">符号</button><svg class="mn"><use href="#menu"/></svg></div>
      <div class="swhead"><svg width="30" height="30"><use href="#fillstroke"/></svg><div class="toggle"><button aria-label="列表视图"><svg width="14" height="14"><path d="M1 1h12v2H1zM1 5h12v2H1zM1 9h12v2H1zM1 12h12v2H1z" fill="#ccc"/></svg></button><button class="on" aria-label="缩览图视图"><svg width="14" height="14"><path d="M0 0h4v4H0zM5 0h4v4H5zM10 0h4v4h-4zM0 5h4v4H0zM5 5h4v4H5zM10 5h4v4h-4zM0 10h4v4H0zM5 10h4v4H5zM10 10h4v4h-4z" fill="#fff"/></svg></button></div></div>
      <div class="swlist"><div class="swatches" id="swatches"></div><div class="swscroll"><svg class="c10"><path d="m1 7 4-4 4 4" fill="none" stroke="#999" stroke-width="1.500"/></svg><svg class="c10"><path d="m1 3 4 4 4-4" fill="none" stroke="#999" stroke-width="1.500"/></svg></div></div>
      <div class="pbar sw">
        <button aria-label="色板库"><svg width="16" height="12"><path d="M1 1v10M4 1v10M8 1l3 10" stroke="#c4c4c4" stroke-width="2"/><path d="M13 10h2v2h-2z" fill="#c4c4c4"/></svg></button>
        <button aria-label="颜色主题"><svg width="12" height="12"><path d="M9 1 6 5l3 5" stroke="#c4c4c4" fill="none" stroke-width="1.500"/><circle cx="4" cy="6" r="2.500" fill="none" stroke="#c4c4c4" stroke-width="1.500"/><circle cx="9" cy="2" r="1.500" fill="#c4c4c4"/><circle cx="9" cy="10" r="1.500" fill="#c4c4c4"/></svg></button>
        <button aria-label="添加到库"><svg width="18" height="12"><path d="M5 9V6h2q0-5 5-5 3 1 3 3 3 1 2 5-1 2-4 2H5z" fill="#c4c4c4"/><path d="M0 9h6" stroke="#c4c4c4" stroke-width="2"/></svg></button><i></i>
        <button aria-label="显示色板类型"><svg width="16" height="12"><path d="M0 0h11v11H0z" fill="#c4c4c4"/><path d="M0 3.500h11M0 7.500h11M3.500 0v11M7.500 0v11" stroke="#535353"/><path d="M13 10h2v2h-2z" fill="#c4c4c4"/></svg></button>
        <button class="dim" aria-label="色板选项"><svg width="12" height="12"><path d="M.500.500h11v11H.500zM0 2.500h12M3 5.500h6M3 8.500h6" fill="none" stroke="currentColor"/></svg></button>
        <button aria-label="新建颜色组"><svg width="14" height="11"><path d="M0 1h5l1 2h8v8H0z" fill="#c4c4c4"/></svg></button>
        <button class="dim" aria-label="新建色板"><svg width="12" height="12"><use href="#newitem"/></svg></button>
        <button class="dim" aria-label="删除色板"><svg width="12" height="14"><use href="#trash"/></svg></button>
      </div>
      <div class="foot"><i class="hgrip"></i></div>
    </section>
  </aside>
</div>
<script src="script.js"></script>
</body>
</html>
```
FILE: styles.css
```css
* { box-sizing: border-box; }
body { margin: 0; background: #535353; color: #d4d4d4; font: 12px/16px "Noto Sans CJK SC", sans-serif; }
button, input, select { font: inherit; color: inherit; margin: 0; padding: 0; border: 0; background: none; border-radius: 0; min-width: 0; }
button { white-space: nowrap; }
a { color: inherit; text-decoration: none; }
svg { flex: none; display: block; }
hr { margin: 0; border: 0; height: 2px; background: #4a4a4a; width: 100%; }
.defs { position: absolute; width: 0; height: 0; }
.app { position: relative; min-height: 100vh; display: flex; flex-direction: column; }
.spacer { flex: 1; }
.plain { display: flex; align-items: center; justify-content: center; }
.c10 { width: 10px; height: 10px; color: #ddd; }
.c10.dim, .dim { color: #757575; }
.w20 { width: 20px; } .w22 { width: 22px; } .w34 { width: 34px; } .w38 { width: 38px; justify-content: space-between; padding: 0 0 0 6px; }
.dotted { border-bottom: 1px dotted #ccc; line-height: 15px; color: #e6e6e6; }

/* menu bar */
.menubar { height: 35px; display: flex; align-items: center; padding: 0 7px 0 13px; border-top: 1px solid #3d3d3d; border-bottom: 1px solid #3a3a3a; }
.logo { width: 33px; font: 600 22px/28px "Open Sans", sans-serif; color: #bd8b68; }
.home { width: 34px; height: 20px; justify-content: flex-start; border-right: 1px solid #484848; }
.menus { display: flex; gap: 12px; padding: 0 11px 4px 14px; }
.menus button { font-size: 13px; line-height: 20px; color: #e8e8e8; }
.layout { gap: 7px; padding-left: 12px; height: 20px; border-left: 1px solid #484848; }
.workspace-name { height: 20px; gap: 10px; padding: 0 12px 4px 12px; border: solid #484848; border-width: 0 1px; color: #e8e8e8; }
.search { display: flex; align-items: center; gap: 4px; width: 130px; height: 20px; margin: 0 8px; padding: 0 4px; background: #464646; border: 1px solid #3c3c3c; border-radius: 3px; }
.search input { width: 100px; font: 10px/14px "Liberation Mono", "Noto Sans CJK SC", monospace; }
.search input::placeholder { color: #8a8a8a; }
.winbtns { display: flex; align-self: flex-start; height: 20px; border: 1px solid #686868; border-top: 0; border-radius: 0 0 3px 3px; }
.winbtns button { width: 28px; display: flex; align-items: center; justify-content: center; border-left: 1px solid #686868; }
.winbtns button:first-child { border-left: 0; }

/* control bar */
.control { height: 34px; display: flex; align-items: center; gap: 7px; padding: 0 22px 0 8px; border-bottom: 1px solid #3a3a3a; white-space: nowrap; }
.control > *, .grp > * { flex: none; }
.control > .spacer { flex: 1; }
.vgrip { width: 5px; height: 20px; background: repeating-linear-gradient(#3c3c3c 0 1px, transparent 1px 3px); }
.kind { width: 86px; height: 28px; line-height: 28px; border-right: 1px solid #484848; }
.vdiv { width: 1px; height: 28px; background: #474747; }
.grp { display: flex; align-items: center; gap: 3px; }
.w42 { width: 42px; text-align: right; }
.field { display: flex; align-items: center; height: 21px; background: #454545; border: 1px solid #606060; border-radius: 2px; overflow: hidden; }
.field input { flex: 1; width: 20px; height: 19px; padding: 0 3px; font: 10px/19px "DejaVu Sans Mono", "Noto Sans CJK SC", monospace; color: #f0f0f0; }
.field .st { width: 17px; height: 18px; border-right: 1px solid #606060; padding: 0 3px; color: #eee; }
.field .ch { width: 17px; height: 19px; border-left: 1px solid #606060; padding: 4px 3px; color: #eee; }
.field input.cn { font: 12px/19px "Noto Sans CJK SC", sans-serif; }
.field.off { border-color: #585858; background: #505050; }
.field.off .st, .field.off input { color: #7a7a7a; border-color: #5a5a5a; }
.control .field input { padding: 0 0 0 3px; }
.w79 { width: 79px; } .w69 { width: 69px; } .w64 { width: 64px; } .w70 { width: 70px; } .w87 { width: 87px; } .w56 { width: 56px; } .w76 { width: 76px; }
.swcombo, .graycombo, .brush { display: flex; align-items: center; height: 20px; background: #484848; }
.swcombo { width: 37px; gap: 4px; }
.graycombo { width: 108px; gap: 4px; background: #565656; }
.graycombo i { width: 90px; height: 20px; background: #808080; }
.graycombo .c10 { color: #6c6c6c; }
.brush { width: 103px; gap: 6px; background: linear-gradient(90deg, #e0e0e0 86px, #484848 86px); color: #222; padding-left: 5px; }
.brush i { width: 47px; height: 4px; background: #000; }
.brush span { width: 26px; }
.link { width: 25px; height: 24px; background: #303030; border-radius: 3px; display: flex; align-items: center; justify-content: center; }
.corner { width: 24px; justify-content: flex-end; }
.rightgrp { display: flex; align-items: center; gap: 12px; }

/* document tabs and stage */
.doctabs { height: 29px; background: #424242; border-left: 5px solid #4a4a4a; display: flex; border-bottom: 1px solid #3a3a3a; }
.doctab { display: flex; align-items: center; gap: 16px; padding: 0 6px 0 10px; background: #535353; color: #e6e6e6; font-size: 13px; line-height: 20px; }
.stage { flex: 1; display: flex; justify-content: space-between; margin-left: 5px; background: #fff; }
.stage .art { display: block; }
.vscroll { width: 21px; background: #4c4c4c; border-right: 4px solid #444; display: flex; flex-direction: column; align-items: center; padding-top: 4px; }
.vscroll i { width: 14px; height: 26px; margin-top: 437px; border-radius: 5px; background: #686868; }
.caption { height: 45px; background: #323232; color: #fff; text-align: center; font: 300 36px/42px "Noto Sans CJK SC", sans-serif; }

/* panels */
.panel { position: absolute; background: #535353; border: 1px solid #363636; border-radius: 4px 4px 0 0; box-shadow: 0 0 4px rgba(0, 0, 0, .3); }
.title { height: 13px; background: #424242; display: flex; justify-content: flex-end; gap: 10px; padding: 0 4px; font: 9px/13px "DejaVu Sans", sans-serif; color: #c4c4c4; border-radius: 4px 4px 0 0; }
.tabs { display: flex; height: 27px; background: #424242; border-bottom: 1px solid #3a3a3a; }
.tabs button { display: flex; align-items: center; justify-content: center; gap: 5px; height: 27px; padding-bottom: 1px; color: #a0a0a0; border-right: 1px solid #393939; background: #474747; }
.tabs button.on { background: #535353; color: #f2f2f2; }
.tabs .ud { width: 6px; height: 10px; }
.tabs .mn { width: 10px; height: 9px; margin: 9px 6px 0 auto; color: #b8b8b8; }
.t43 { width: 43px; } .t44 { width: 44px; } .t48 { width: 48px; } .t49 { width: 49px; } .t50 { width: 50px; } .t55 { width: 55px; } .t67 { width: 67px; } .t78 { width: 78px; } .t79 { width: 79px; }
.tabs .t78 { font-size: 13px; }
.panel section + section { border-top: 3px solid #3c3c3c; }
.hgrip { display: block; width: 20px; height: 4px; margin: 0 auto; background: repeating-linear-gradient(90deg, #333 0 1px, transparent 1px 2px); }
.foot { height: 9px; border-top: 2px solid #3a3a3a; padding-top: 2px; }

/* tools */
.tools { left: 128px; top: 195px; width: 72px; display: flex; flex-direction: column; align-items: center; padding-bottom: 12px; }
.tools .title { align-self: stretch; }
.tools > .hgrip { margin: 4px 0 11px; }
.toolgrid { display: grid; grid-template-columns: 30px 30px; grid-auto-rows: 24px; border-bottom: 1px solid #474747; padding-bottom: 2px; }
.toolgrid button { display: flex; align-items: center; justify-content: center; border-radius: 3px; border: 1px solid #535353; }
.toolgrid button.on { background: #2e2e2e; }
.toolgrid button.m { background: linear-gradient(135deg, transparent 2px, #c4c4c4 2px) right bottom / 4px 4px no-repeat; }
.toolgrid svg { width: 20px; height: 20px; }
.bigfs { margin-top: 5px; }
.trio { display: flex; width: 60px; height: 20px; margin-top: 4px; border: 1px solid #5e5e5e; }
.trio button { flex: 1; display: flex; align-items: center; justify-content: center; border-right: 1px solid #5e5e5e; }
.trio button.on { background: #2e2e2e; }
.screen { margin-top: 7px; }
.more { margin-top: 21px; height: 4px; }

/* type panel */
.type { right: 527px; top: 102px; width: 250px; }
.body { display: flex; flex-direction: column; gap: 5px; padding: 5px; }
.body.ot { padding-top: 6px; }
.lrow { display: flex; align-items: center; }
.lrow label { width: 36px; }
.lrow select { flex: 1; height: 21px; appearance: none; border: 1px solid #606060; border-radius: 2px; background: #4a4a4a; padding-left: 6px; color: #f4f4f4; font-weight: 500; }
.otico { display: grid; grid-template-columns: repeat(9, 26px); height: 26px; text-align: center; font: 20px/26px "Liberation Serif", serif; color: #7c7c7c; }
.otico b { color: #d8d8d8; }
.otico sup { font-size: 11px; line-height: 10px; }
.checks { display: flex; flex-direction: column; gap: 4px; padding: 4px 0 0 1px; height: 61px; color: #757575; }
.checks label { display: flex; align-items: center; gap: 6px; }
input[type="checkbox"] { appearance: none; width: 12px; height: 12px; border: 1px solid #757575; border-radius: 2px; }
.font { width: 220px; }
.font .fs { width: 18px; height: 14px; margin-left: 2px; }
.font input { font: 11px/19px "Liberation Mono", "Noto Sans CJK SC", monospace; padding-left: 6px; }
.pair { display: grid; grid-template-columns: 102px 102px; justify-content: space-between; gap: 5px 0; }
.ctl { display: flex; align-items: center; gap: 4px; height: 21px; }
.ctl .field, .ctl .sel { width: 80px; }
.gl { width: 18px; font: bold 17px/20px "Liberation Serif", serif; color: #bbb; white-space: nowrap; }
.gl small { font-size: 11px; line-height: 12px; }
.gl.sans { font: 13px/18px "Liberation Sans", sans-serif; }
.kana { width: 18px; display: flex; flex-direction: column; align-items: center; color: #bbb; font-size: 10px; line-height: 11px; }
.kana span { border: dotted #aaa; border-width: 0 1px; padding: 0 1px; }
.sel { display: grid; align-items: center; height: 21px; border: 1px solid #606060; border-radius: 2px; background: #4a4a4a; }
.sel select { grid-area: 1 / 1; width: 100%; height: 19px; appearance: none; padding-left: 6px; color: #f0f0f0; }
.sel svg { grid-area: 1 / 1; justify-self: end; margin-right: 4px; pointer-events: none; }
.tts { display: flex; align-items: center; height: 14px; font: 16px/14px "Liberation Serif", serif; color: #c8c8c8; }
.tts button { width: 30px; height: 14px; line-height: 14px; }
.tts i { flex: 1; }
.tts small { font-size: 12px; line-height: 12px; } .tts sup, .tts sub { font-size: 8px; line-height: 6px; }
.lang { display: grid; grid-template-columns: 89px 1fr 89px; align-items: center; }
.aa { text-align: right; padding-right: 8px; font: 14px/16px "Liberation Sans", sans-serif; }
.stroke { color: #757575; }
.stroke hr { flex: none; }
.srow { display: flex; align-items: center; height: 21px; }
.srow.b { height: 22px; } .srow.a { height: 24px; }
.srow > :first-child { width: 60px; text-align: right; white-space: nowrap; }
.srow.live { color: #d4d4d4; }
.bg { display: flex; border: 1px solid #626262; height: 22px; }
.bg button { width: 22px; display: flex; align-items: center; justify-content: center; fill: #7a7a7a; }
.bg button + button { border-left: 1px solid #626262; }
.bg svg { width: 14px; height: 14px; }
.bg.wide button { width: 37px; } .bg.wide svg { width: 30px; }
.lim { margin-left: auto; width: 36px; }
.ghost { width: 39px; height: 21px; background: #585858; }
.x { width: 10px; text-align: right; }
.dash { display: flex; justify-content: space-between; align-items: center; color: #f0f0f0; }
.dash label { display: flex; align-items: center; gap: 6px; padding-left: 1px; font-weight: 500; }
.dash .mixed { background: linear-gradient(#333, #333) center / 6px 2px no-repeat #c8c8c8; border: 0; }
.dashes { display: grid; grid-template-columns: repeat(6, 1fr); gap: 7px; padding: 0 3px; text-align: center; line-height: 15px; }
.dashes input { display: block; width: 100%; height: 20px; background: #575757; }
.gsel { display: flex; align-items: center; gap: 4px; width: 56px; height: 21px; background: #585858; margin-right: 7px; }
.gsel i { width: 38px; height: 21px; background: #808080; }
.gsel.long { width: 106px; } .gsel.long i { width: 88px; }
.gsel .c10 { color: #808080; }
.srow .off { margin-right: 7px; }
.end { margin-left: auto; margin-right: 5px; }
.nx { margin: 0 5px 0 8px; }
.body.stroke { padding: 6px 5px 7px; }

/* dock */
.dock { position: absolute; top: 83px; right: 33px; bottom: 45px; width: 281px; display: flex; flex-direction: column; }
.dock .title { height: 14px; border: 1px solid #383838; }
.dock .exp { margin-right: auto; padding-left: 24px; }
.dockrow { flex: 1; display: flex; align-items: flex-start; }
.strip { width: 40px; height: 68px; background: #535353; border: 1px solid #3a3a3a; border-top: 0; display: flex; flex-direction: column; align-items: center; padding-top: 3px; }
.strip button { width: 28px; height: 24px; margin-top: 4px; border-radius: 3px; display: flex; align-items: center; justify-content: center; }
.strip .on { background: #333; }
.layers { flex: 1; align-self: stretch; background: #535353; border-left: 1px solid #3a3a3a; }
.layerlist { margin: 6px 6px 0 5px; border-left: 1px solid #5e5e5e; }
.layer { display: flex; align-items: center; height: 22px; background: linear-gradient(225deg, #c4c4c4 5px, transparent 5px), #50647d; padding-left: 3px; color: #e8e8e8; }
.eye { width: 14px; height: 10px; color: #c4c4c4; }
.eye.dim { color: #787878; }
.bar { width: 3px; height: 18px; background: #5b7be0; margin: 0 5px 0 26px; }
.layer .c10 { margin-right: 11px; }
.layer span { margin-left: 5px; }
.tgt { margin-left: auto; }

/* colour */
.color { right: 314px; top: 97px; width: 240px; border-radius: 0; border-top: 0; }
.more2 { margin: 8px 6px 0 auto; }
.tabs .more2 + .mn { margin-left: 0; }
.cbody { display: flex; padding: 5px 5px 0; gap: 3px; }
.sliders { flex: 1; display: flex; flex-direction: column; gap: 4px; padding-top: 4px; }
.sliders label { display: flex; align-items: center; height: 21px; }
.sliders span { width: 16px; font: 12px/16px "Liberation Serif", serif; }
.sliders i { flex: 1; height: 6px; border: 1px solid #606060; margin-right: 7px; }
.sliders input { width: 36px; height: 21px; background: #454545; border: 1px solid #606060; border-radius: 3px; }
.sliders em { width: 16px; padding-left: 2px; font: 10px/16px "DejaVu Sans Mono", monospace; }
.spectrum { height: 24px; margin: 7px 16px 4px 6px; border: 1px solid #333; background: linear-gradient(#fff, rgba(255, 255, 255, 0) 40%, rgba(0, 0, 0, 0) 50%, #000), linear-gradient(90deg, #e81c24, #f6e93a 17%, #4cb52f 33%, #28a85a 42%, #38b6e8 54%, #1a45a8 67%, #7e3a98 77%, #e6128c 89%, #e01832); }
.color .foot { height: 10px; }

/* info group */
.info { right: 207px; top: 309px; width: 265px; }
.infobody { display: grid; grid-template-columns: 131px 131px; height: 47px; padding-top: 4px; }
.infobody > div { display: flex; align-items: center; padding-left: 6px; gap: 4px; }
.infobody > div + div { border-left: 1px solid #474747; padding-left: 3px; gap: 3px; }
dl { display: grid; grid-template-columns: 20px 84px; margin: 0; row-gap: 4px; font: 10px/16px "DejaVu Sans Mono", "Noto Sans CJK SC", monospace; color: #c8c8c8; }
dl.wide { grid-template-columns: 28px 72px; }
dl.wide dt { font-size: 12px; }
dd { margin: 0; }
.infofoot { height: 27px; padding: 0 10px 0 7px; }
.infofoot i { display: block; width: 1px; height: 16px; margin: 5px 0 0 124px; background: #474747; }
.ablock { display: flex; flex-direction: column; padding-top: 6px; height: 58px; }
.ablock span { height: 16px; padding-left: 5px; color: #d8d8d8; }
.aicons { display: flex; height: 34px; align-items: center; }
.aicons button { width: 36px; display: flex; justify-content: center; }
.aicons svg { width: 18px; height: 18px; fill: #c4c4c4; }
.aicons i { flex: 1; }
.ablock hr { margin: 0 6px; width: auto; }
.last { flex-direction: row; justify-content: space-between; height: 57px; }
.last .aicons { padding-left: 2px; }
.last .aicons button { width: 32px; }
.last .aicons .field { height: 21px; padding: 0; margin-left: 2px; }
.last .aicons .st { width: 17px; fill: none; }
.alto { width: 81px; border-left: 2px solid #494949; height: 48px; text-align: right; padding-right: 3px; }
.alto .plain { margin: 8px 0 0 auto; width: 40px; height: 18px; gap: 2px; }
.applist { margin: 6px 5px 0 5px; height: 181px; border: 1px solid #5e5e5e; color: #e0e0e0; }
.applist > div { display: flex; align-items: center; height: 25px; border-bottom: 1px solid #606060; padding-left: 5px; background: linear-gradient(#3c3c3c, #3c3c3c) 24px 0 / 1px 100% no-repeat; }
.applist > .head { padding-left: 2px; gap: 29px; background: none; }
.applist b { font-weight: 500; }
.applist .c10 { margin: 0 10px 0 11px; }
.chip { margin-left: 6px; }
.applist .sub .eye { margin-right: 54px; } .applist .flat .eye { margin-right: 31px; }
.pbar { display: grid; grid-template-columns: repeat(9, 1fr); width: 244px; height: 18px; padding-left: 4px; }
.pbar button { display: flex; align-items: center; justify-content: center; }
.pbar svg { max-height: 14px; }
.fx { font: italic 16px/16px "Liberation Sans", sans-serif; }
.swhead { display: flex; justify-content: space-between; padding: 6px 5px 0 5px; height: 41px; }
.toggle { display: flex; height: 24px; border: 1px solid #626262; }
.toggle button { width: 24px; display: flex; align-items: center; justify-content: center; }
.toggle .on { background: #2e2e2e; }
.swlist { display: flex; margin: 0 5px 0 5px; height: 52px; overflow: hidden; border: 1px solid #606060; }
.swatches { display: grid; grid-template-columns: repeat(17, 14px); grid-auto-rows: 14px; }
.swatches button { width: 13px; height: 13px; display: block; }
.swscroll { display: flex; flex-direction: column; justify-content: space-between; padding: 1px; border-left: 1px solid #5a5a5a; }
```
FILE: script.js
```js
// Swatch library: one entry per cell, left to right, top to bottom.
const cells = [
  'none', 'reg', '#fff', '#000', '#e60012', '#fff100', '#0a9844', '#0e9be8', '#1d2088', '#e4007f', '#c30d23', '#e83828', '#ea5514', '#f39800', '#f8b62d', '#f5ec12', '#dcdf00',
  '#8fc31f', '#22ac38', '#0a9038', '#00652f', '#18b06e', '#0fa29a', '#2ea7e0', '#0f6ebb', '#13278a', '#171c61', '#5f1985', '#920783', '#a40b5d', '#d7004f', '#ea1679', '#c9bc9c', '#a08878',
  '#7a6a56', '#5f4a3e', '#c8a062', '#b08448', '#946134', '#7d4e24', '#6a3906', '#40210f',
  'linear-gradient(90deg,#fff,#222)', 'linear-gradient(90deg,#fff100,#ea5514)', 'linear-gradient(90deg,#1c7ac8,#cfe4f4)', 'radial-gradient(#ddd 45%,#000 50%)', 'radial-gradient(#fff 20%,#6a2 30%,#cd6)', 'repeating-linear-gradient(45deg,#a9764a 0 2px,#dcc4a4 2px 3px)', '', '', '',
  'folder', '#000', '#333', '#555', '#717071', '#898989', '#9f9fa0', '#b5b5b6', '#c9caca', '#dcdddd', '#efefef', '#fff'
];
const art = {
  none: '<svg width="13" height="13"><path d="M0 0h13v13H0z" fill="#fff"/><path d="M1.500 1.500h10v10h-10z" fill="none" stroke="#000"/><path d="m2 11 9-9" stroke="#c1121c" stroke-width="2"/></svg>',
  reg: '<svg width="13" height="13"><path d="M0 0h13v13H0z" fill="#ddd"/><circle cx="6.500" cy="6.500" r="4.500" fill="none" stroke="#333"/><circle cx="6.500" cy="6.500" r="2" fill="none" stroke="#333"/><path d="M6.500 0v13M0 6.500h13" stroke="#333"/></svg>',
  folder: '<svg width="13" height="13"><path d="M1 3h5l1 2h5v7H1z" fill="none" stroke="#ccc" stroke-width="1.500"/></svg>'
};
const box = document.getElementById('swatches');
for (const c of cells) {
  const el = document.createElement(c ? 'button' : 'span');
  if (art[c]) el.innerHTML = art[c];
  else if (c) el.style.background = c;
  if (c) el.setAttribute('aria-label', '色板');
  box.append(el);
}
```
